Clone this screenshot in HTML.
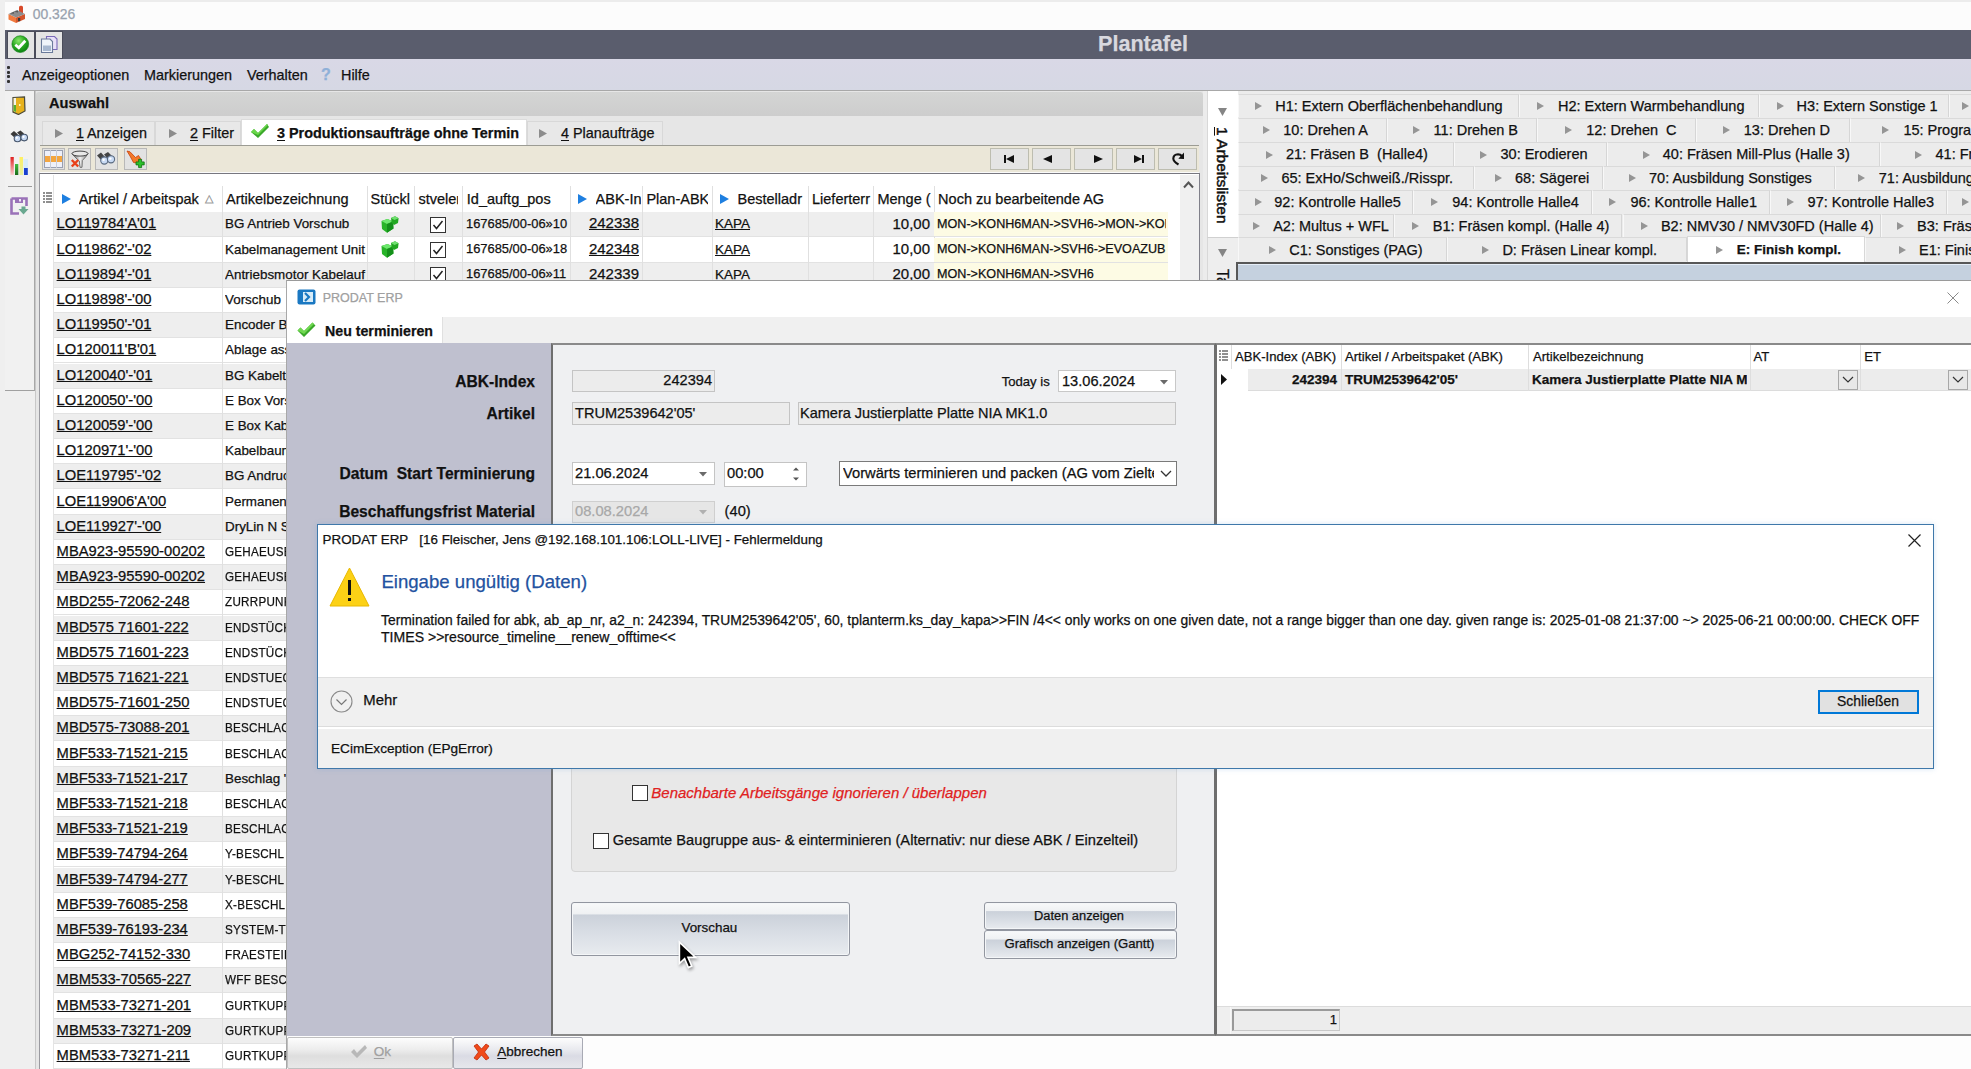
<!DOCTYPE html><html><head><meta charset="utf-8"><style>
html,body{margin:0;padding:0;width:1971px;height:1069px;overflow:hidden;background:#fdfdfd;font-family:"Liberation Sans",sans-serif;}
div{box-sizing:border-box;-webkit-text-stroke:0.25px currentColor;}
.u{text-decoration:underline;text-underline-offset:2px;text-decoration-thickness:1.3px;}
</style></head><body>
<div style="position:absolute;left:0px;top:0px;width:1971px;height:30px;background:#fcfcfc;"></div>
<div style="position:absolute;left:0px;top:0px;width:1971px;height:2px;background:#ececec;"></div>
<div style="position:absolute;left:0px;top:0px;width:5px;height:1069px;background:#efefef;"></div>
<svg style="position:absolute;left:8px;top:5px" width="18" height="19" viewBox="0 0 18 19">
      <rect x="11" y="0.8" width="4" height="8" rx="1.5" fill="#d84a2a"/>
      <path d="M0.5 9 L8 12.5 L8 18 L0.5 14.5Z" fill="#f07a3e"/><path d="M8 12.5 L17 9 L17 14 L8 18Z" fill="#d4552c"/>
      <path d="M0.5 9 L9 5 L17 9 L8 12.5Z" fill="#8c8c8c"/><path d="M2 8.5 L6 6.8 L6 8.8Z M6 6.8 L10 5.6 L10 7.4Z" fill="#5a5a5a"/>
      <rect x="10" y="13" width="2.2" height="3.2" fill="#3a3a3a"/></svg>
<div style="position:absolute;left:32.7px;top:6.16px;font-size:13.9px;line-height:16.68px;color:#98a2ae;font-weight:normal;white-space:nowrap;">00.326</div>
<div style="position:absolute;left:5px;top:30px;width:1966px;height:29px;background:#5a5d6d;"></div>
<div style="position:absolute;left:6.5px;top:30.5px;width:28px;height:28px;background:#e4e4e4;border:1.5px solid #4a4c5a;"></div>
<svg style="position:absolute;left:11px;top:35px" width="19" height="19" viewBox="0 0 19 19">
      <defs><radialGradient id="gg" cx="40%" cy="30%" r="65%"><stop offset="0" stop-color="#8ae86a"/><stop offset="0.6" stop-color="#2aaa22"/><stop offset="1" stop-color="#108a14"/></radialGradient></defs>
      <circle cx="9.3" cy="9.1" r="8.4" fill="url(#gg)" stroke="#0e7a12" stroke-width="0.6"/><path d="M4.3 9.8 L7.8 12.8 L14.3 5.8" stroke="#fff" stroke-width="2.8" fill="none"/></svg>
<div style="position:absolute;left:34.5px;top:30.5px;width:28.5px;height:28px;background:#e4e4e4;border:1.5px solid #4a4c5a;"></div>
<svg style="position:absolute;left:40px;top:35px" width="19" height="19" viewBox="0 0 19 19">
      <path d="M6.5 1.5 L14.5 1.5 L17 4 L17 14.5 L6.5 14.5Z" fill="#e8e0f8" stroke="#7a6ab8" stroke-width="1.1"/>
      <path d="M1.5 4 L10 4 L12.5 6.5 L12.5 17.5 L1.5 17.5Z" fill="#f0f4fa" stroke="#6a7a9a" stroke-width="1.1"/><rect x="3" y="10.5" width="8" height="5.5" fill="#a8b8d0"/></svg>
<div style="position:absolute;left:843px;width:600px;top:31.04px;font-size:21.6px;line-height:25.92px;color:#d8d8de;font-weight:bold;white-space:nowrap;text-align:center;">Plantafel</div>
<div style="position:absolute;left:5px;top:59px;width:1966px;height:32px;background:linear-gradient(#d9d8e6,#d6d8e4);border-bottom:1px solid #a8a8a8;"></div>
<div style="position:absolute;left:7px;top:66.0px;width:3px;height:3px;background:#333;border-radius:1px;"></div>
<div style="position:absolute;left:7px;top:70.5px;width:3px;height:3px;background:#333;border-radius:1px;"></div>
<div style="position:absolute;left:7px;top:75.0px;width:3px;height:3px;background:#333;border-radius:1px;"></div>
<div style="position:absolute;left:7px;top:79.5px;width:3px;height:3px;background:#333;border-radius:1px;"></div>
<div style="position:absolute;left:22px;top:67.36px;font-size:14.4px;line-height:17.28px;color:#111;font-weight:normal;white-space:nowrap;">Anzeigeoptionen</div>
<div style="position:absolute;left:144px;top:67.36px;font-size:14.4px;line-height:17.28px;color:#111;font-weight:normal;white-space:nowrap;">Markierungen</div>
<div style="position:absolute;left:247px;top:67.36px;font-size:14.4px;line-height:17.28px;color:#111;font-weight:normal;white-space:nowrap;">Verhalten</div>
<div style="position:absolute;left:321px;top:65.40px;font-size:16px;line-height:19.20px;color:#8fb0d8;font-weight:bold;white-space:nowrap;">?</div>
<div style="position:absolute;left:341px;top:67.36px;font-size:14.4px;line-height:17.28px;color:#111;font-weight:normal;white-space:nowrap;">Hilfe</div>
<div style="position:absolute;left:5px;top:91px;width:30px;height:300px;background:#f1f1f1;border-right:1px solid #a8a8a8;border-bottom:1.5px solid #a0a0a0;"></div>
<div style="position:absolute;left:8px;top:186px;width:24px;height:1px;background:#9a9a9a;"></div>
<div style="position:absolute;left:35px;top:91px;width:5px;height:978px;background:#e6e6e6;"></div>
<svg style="position:absolute;left:12px;top:96px" width="14" height="19" viewBox="0 0 14 19">
      <path d="M1 1.5 L12.5 1 L13 15 L6.5 18.5 L1 16Z" fill="#e7b21c" stroke="#4a4a3a" stroke-width="1.2"/><path d="M1.6 2 L4 2 L4 16 L1.6 15Z" fill="#f4f4e8"/><path d="M1.6 9 L4 9 L4 16 L1.6 15Z" fill="#58b030"/><rect x="7" y="8" width="1.5" height="2" fill="#fff6c0"/></svg>
<svg style="position:absolute;left:10px;top:130px" width="19" height="13" viewBox="0 0 19 13">
      <path d="M0.5 4 L4 1 L8 4.5 L5 8Z" fill="#3a3a3a"/><path d="M7 2.5 L10.5 0.5 L14 3.5 L11 6.5Z" fill="#3a3a3a"/>
      <circle cx="7.5" cy="8.5" r="3.3" fill="#c8daf4" stroke="#46566c" stroke-width="1.1"/><circle cx="14.2" cy="7.6" r="3.3" fill="#c8daf4" stroke="#46566c" stroke-width="1.1"/>
      <circle cx="6.8" cy="7.8" r="1.1" fill="#fff"/><circle cx="13.5" cy="6.9" r="1.1" fill="#fff"/></svg>
<svg style="position:absolute;left:10px;top:156px" width="19" height="20" viewBox="0 0 19 20">
      <defs><linearGradient id="br" x1="0" y1="0" x2="0" y2="1"><stop offset="0" stop-color="#e02020"/><stop offset="1" stop-color="#f8d0d0"/></linearGradient>
      <linearGradient id="bg2" x1="0" y1="0" x2="0" y2="1"><stop offset="0" stop-color="#40c040"/><stop offset="1" stop-color="#1a6a1a"/></linearGradient>
      <linearGradient id="by" x1="0" y1="0" x2="0" y2="1"><stop offset="0" stop-color="#fff060"/><stop offset="1" stop-color="#e8f0a0"/></linearGradient></defs>
      <rect x="0.5" y="1" width="3.3" height="18" fill="url(#br)"/><rect x="5" y="8" width="3.3" height="11" fill="url(#bg2)"/>
      <rect x="9.5" y="1" width="3.5" height="18" fill="url(#by)"/><rect x="13.5" y="3" width="4.5" height="16" fill="#d8ecf8"/><rect x="14" y="12" width="3.8" height="7" fill="#1a40d0"/></svg>
<svg style="position:absolute;left:10px;top:197px" width="19" height="19" viewBox="0 0 19 19">
      <path d="M1.5 1.5 L16.5 1.5 L16.5 9 M1.5 1.5 L1.5 16.5 L9 16.5" fill="none" stroke="#9a72b8" stroke-width="2.6"/><rect x="5" y="1" width="8" height="5" fill="#9a72b8"/><rect x="9" y="2" width="2" height="2.5" fill="#f0e8f8"/>
      <path d="M11.5 9.5 L15.5 9.5 L15.5 12 L18.5 12 L13.5 17.5 L8.5 12 L11.5 12Z" fill="#6aa890"/></svg>
<div style="position:absolute;left:5px;top:391px;width:30px;height:678px;background:#efefef;"></div>
<div style="position:absolute;left:35px;top:91px;width:1169px;height:978px;background:#e6e6e6;border-left:1px solid #c8c8c8;"></div>
<div style="position:absolute;left:36px;top:92px;width:1167px;height:24px;background:linear-gradient(#d4d5d4,#cdcdcd);border-radius:3px 3px 0 0;"></div>
<div style="position:absolute;left:49px;top:95.24px;font-size:14.6px;line-height:17.52px;color:#111;font-weight:bold;white-space:nowrap;">Auswahl</div>
<div style="position:absolute;left:42px;top:121px;width:113px;height:25px;background:#e8e8e8;border:1px solid #d8d8d8;border-bottom:none;"></div>
<svg style="position:absolute;left:55.0px;top:129.0px" width="8" height="9" viewBox="0 0 8 9"><path d="M0 0 L8 4.5 L0 9Z" fill="#8c8c8c"/></svg>
<div style="position:absolute;left:76px;top:124.86px;font-size:14.4px;line-height:17.28px;color:#111;font-weight:normal;white-space:nowrap;"><span class='u'>1</span>&#8201;Anzeigen</div>
<div style="position:absolute;left:155px;top:121px;width:86px;height:25px;background:#e8e8e8;border:1px solid #d8d8d8;border-bottom:none;"></div>
<svg style="position:absolute;left:169.0px;top:129.0px" width="8" height="9" viewBox="0 0 8 9"><path d="M0 0 L8 4.5 L0 9Z" fill="#8c8c8c"/></svg>
<div style="position:absolute;left:190px;top:124.86px;font-size:14.4px;line-height:17.28px;color:#111;font-weight:normal;white-space:nowrap;"><span class='u'>2</span> Filter</div>
<div style="position:absolute;left:241px;top:119px;width:286px;height:28px;background:#ffffff;border:1px solid #dcdcdc;border-bottom:none;"></div>
<div style="position:absolute;left:277px;top:124.86px;font-size:14.4px;line-height:17.28px;color:#111;font-weight:bold;white-space:nowrap;"><span class='u'>3</span> Produktionsaufträge ohne Termin</div>
<div style="position:absolute;left:527px;top:121px;width:136px;height:25px;background:#e8e8e8;border:1px solid #d8d8d8;border-bottom:none;"></div>
<svg style="position:absolute;left:539.0px;top:129.0px" width="8" height="9" viewBox="0 0 8 9"><path d="M0 0 L8 4.5 L0 9Z" fill="#8c8c8c"/></svg>
<div style="position:absolute;left:561px;top:124.86px;font-size:14.4px;line-height:17.28px;color:#111;font-weight:normal;white-space:nowrap;"><span class='u'>4</span> Planaufträge</div>
<svg style="position:absolute;left:250px;top:123px" width="20" height="17" viewBox="0 0 20 17">
      <path d="M1 9 L4 6 L8 10 L17 1 L19 4 L8 15Z" fill="#3aa82a"/><path d="M1 9 L4 6 L8 10 L17 1 L18 2 L8 12Z" fill="#6ad84a"/></svg>
<div style="position:absolute;left:40px;top:145px;width:1159px;height:28px;background:#ebe7d8;border-top:1px solid #9c9c94;border-bottom:1px solid #fafafa;"></div>
<div style="position:absolute;left:42px;top:148px;width:23px;height:22px;background:#e2e2e2;border:1px solid #b8b8b8;"></div>
<div style="position:absolute;left:68px;top:148px;width:23px;height:22px;background:#e2e2e2;border:1px solid #b8b8b8;"></div>
<div style="position:absolute;left:95px;top:148px;width:23px;height:22px;background:#e2e2e2;border:1px solid #b8b8b8;"></div>
<div style="position:absolute;left:124px;top:148px;width:23px;height:22px;background:#e2e2e2;border:1px solid #b8b8b8;"></div>
<svg style="position:absolute;left:44px;top:150px" width="19" height="18" viewBox="0 0 19 18">
      <rect x="0.5" y="0.5" width="18" height="17" fill="#eef0f8" stroke="#9aa0b0"/><rect x="1" y="6" width="17" height="6" fill="#f3a640"/>
      <path d="M6.5 0 V18 M12.5 0 V18" stroke="#c8ccd8"/></svg>
<svg style="position:absolute;left:70px;top:150px" width="20" height="19" viewBox="0 0 20 19">
      <defs><linearGradient id="fun" x1="0" x2="1"><stop offset="0" stop-color="#505050"/><stop offset="0.5" stop-color="#f0f0f0"/><stop offset="1" stop-color="#808080"/></linearGradient></defs>
      <path d="M2 3.6 Q6 8.5 9.3 11 L10 17.3 L12 17.3 L12.3 10.5 Q16 7 18 3.6Z" fill="url(#fun)" stroke="#555" stroke-width="0.8"/>
      <ellipse cx="10" cy="3.6" rx="8" ry="2.5" fill="#e8e8e8" stroke="#333" stroke-width="0.9"/>
      <path d="M1.8 10 L8.2 16.5 M8.2 10 L1.8 16.5" stroke="#e8401a" stroke-width="2.4"/></svg>
<svg style="position:absolute;left:96px;top:151px" width="20" height="16" viewBox="0 0 20 16">
      <path d="M1 4.5 L5 1.5 L9 6 L6 10Z" fill="#444"/><path d="M8 3.5 L12 1 L16 5 L12.5 8.5Z" fill="#444"/>
      <circle cx="8.3" cy="9.5" r="3.6" fill="#c8daf4" stroke="#5a6a80" stroke-width="1.1"/><circle cx="15" cy="8.3" r="3.6" fill="#c8daf4" stroke="#5a6a80" stroke-width="1.1"/>
      <circle cx="7.6" cy="8.8" r="1.2" fill="#fff"/><circle cx="14.3" cy="7.6" r="1.2" fill="#fff"/></svg>
<svg style="position:absolute;left:126px;top:150px" width="20" height="19" viewBox="0 0 20 19">
      <path d="M1 1 L4 1.8 L9.5 7.5 L12.5 5.5 L15 9.5 L13 13.5 L7.5 12.5 L4 6Z" fill="#f47a28" stroke="#c8400a" stroke-width="0.8"/>
      <path d="M12.6 9.3 H15.6 V11.9 H18.2 V14.9 H15.6 V17.6 H12.6 V14.9 H10 V11.9 H12.6Z" fill="#2cc02c" stroke="#107010" stroke-width="0.8"/></svg>
<div style="position:absolute;left:990px;top:148px;width:39px;height:22px;background:#e4e4e4;border:1px solid #bdbdb0;"></div>
<div style="position:absolute;left:1032px;top:148px;width:39px;height:22px;background:#e4e4e4;border:1px solid #bdbdb0;"></div>
<div style="position:absolute;left:1074px;top:148px;width:39px;height:22px;background:#e4e4e4;border:1px solid #bdbdb0;"></div>
<div style="position:absolute;left:1116px;top:148px;width:39px;height:22px;background:#e4e4e4;border:1px solid #bdbdb0;"></div>
<div style="position:absolute;left:1158px;top:148px;width:39px;height:22px;background:#e4e4e4;border:1px solid #bdbdb0;"></div>
<svg style="position:absolute;left:990px;top:148px" width="210" height="22" viewBox="0 0 210 22">
      <rect x="14" y="7" width="2" height="8" fill="#111"/><path d="M16 11 L24 7 L24 15Z" fill="#111"/>
      <path d="M53 11 L62 7 L62 15Z" fill="#111"/>
      <path d="M104 7 L113 11 L104 15Z" fill="#111"/>
      <path d="M144 7 L152 11 L144 15Z" fill="#111"/><rect x="152" y="7" width="2" height="8" fill="#111"/>
      <path d="M188.5 16.5 Q183.3 13.5 183.3 10.5 Q183.5 6.3 188 6.2 Q190.5 6.3 191.8 8" stroke="#111" stroke-width="2.1" fill="none"/><path d="M194 4.6 L194 11 L188.3 10.7Z" fill="#111"/></svg>
<div style="position:absolute;left:39px;top:173px;width:1161px;height:896px;background:#ffffff;border-top:1.5px solid #77777f;border-left:1px solid #9a9aa0;border-right:1.5px solid #80808a;"></div>
<div style="position:absolute;left:53px;top:175px;width:1px;height:894px;background:#e4e4e4;"></div>
<div style="position:absolute;left:1180px;top:175px;width:18.5px;height:894px;background:#f0f0f0;"></div>
<svg style="position:absolute;left:1183px;top:180px" width="11" height="9" viewBox="0 0 11 9"><path d="M1 7.5 L5.5 2.5 L10 7.5" stroke="#555" stroke-width="2" fill="none"/></svg>
<div style="position:absolute;left:221.5px;top:186px;width:1px;height:883px;background:#e0e0e0;"></div>
<div style="position:absolute;left:366.5px;top:186px;width:1px;height:883px;background:#e0e0e0;"></div>
<div style="position:absolute;left:413.5px;top:186px;width:1px;height:883px;background:#e0e0e0;"></div>
<div style="position:absolute;left:461.7px;top:186px;width:1px;height:883px;background:#e0e0e0;"></div>
<div style="position:absolute;left:569.9px;top:186px;width:1px;height:883px;background:#e0e0e0;"></div>
<div style="position:absolute;left:641.7px;top:186px;width:1px;height:883px;background:#e0e0e0;"></div>
<div style="position:absolute;left:711.6px;top:186px;width:1px;height:883px;background:#e0e0e0;"></div>
<div style="position:absolute;left:807.5px;top:186px;width:1px;height:883px;background:#e0e0e0;"></div>
<div style="position:absolute;left:873.2px;top:186px;width:1px;height:883px;background:#e0e0e0;"></div>
<div style="position:absolute;left:933.5px;top:186px;width:1px;height:883px;background:#e0e0e0;"></div>
<svg style="position:absolute;left:43px;top:192px" width="9" height="12" viewBox="0 0 9 12">
      <path d="M0 1h2M0 4h2M0 7h2M0 10h2M3 1h6M3 4h6M3 7h6M3 10h6" stroke="#222" stroke-width="1.2"/></svg>
<svg style="position:absolute;left:61px;top:192.6px" width="11" height="12" viewBox="0 0 11 12"><path d="M1 1 L10 6 L1 11Z" fill="#1e7fe0"/></svg>
<svg style="position:absolute;left:577px;top:192.6px" width="11" height="12" viewBox="0 0 11 12"><path d="M1 1 L10 6 L1 11Z" fill="#1e7fe0"/></svg>
<svg style="position:absolute;left:719px;top:192.6px" width="11" height="12" viewBox="0 0 11 12"><path d="M1 1 L10 6 L1 11Z" fill="#1e7fe0"/></svg>
<div style="position:absolute;left:78.7px;top:189.6px;width:120px;overflow:hidden;font-size:14.5px;line-height:18px;color:#111;white-space:nowrap">Artikel / Arbeitspak</div>
<div style="position:absolute;left:226px;top:189.6px;width:138px;overflow:hidden;font-size:14.5px;line-height:18px;color:#111;white-space:nowrap">Artikelbezeichnung</div>
<div style="position:absolute;left:370.6px;top:189.6px;width:41px;overflow:hidden;font-size:14.5px;line-height:18px;color:#111;white-space:nowrap">Stückl</div>
<div style="position:absolute;left:418.4px;top:189.6px;width:40px;overflow:hidden;font-size:14.5px;line-height:18px;color:#111;white-space:nowrap">stveler</div>
<div style="position:absolute;left:466.8px;top:189.6px;width:100px;overflow:hidden;font-size:14.5px;line-height:18px;color:#111;white-space:nowrap">Id_auftg_pos</div>
<div style="position:absolute;left:595.6px;top:189.6px;width:45px;overflow:hidden;font-size:14.5px;line-height:18px;color:#111;white-space:nowrap">ABK-In</div>
<div style="position:absolute;left:646.4px;top:189.6px;width:62px;overflow:hidden;font-size:14.5px;line-height:18px;color:#111;white-space:nowrap">Plan-ABK</div>
<div style="position:absolute;left:737.5px;top:189.6px;width:68px;overflow:hidden;font-size:14.5px;line-height:18px;color:#111;white-space:nowrap">Bestelladr</div>
<div style="position:absolute;left:812px;top:189.6px;width:59px;overflow:hidden;font-size:14.5px;line-height:18px;color:#111;white-space:nowrap">Lieferterr</div>
<div style="position:absolute;left:877.4px;top:189.6px;width:54px;overflow:hidden;font-size:14.5px;line-height:18px;color:#111;white-space:nowrap">Menge (</div>
<div style="position:absolute;left:938.1px;top:189.6px;width:230px;overflow:hidden;font-size:14.5px;line-height:18px;color:#111;white-space:nowrap">Noch zu bearbeitende AG</div>
<div style="position:absolute;left:-91px;width:600px;top:192.00px;font-size:11px;line-height:13.20px;color:#909090;font-weight:normal;white-space:nowrap;text-align:center;">&#9651;</div>
<div style="position:absolute;left:54px;top:212.3px;width:1114px;height:25.2px;background:#eeeeee;border-bottom:1px solid #e2e2e2;"></div>
<div style="position:absolute;left:56.6px;top:214.40px;font-size:14.75px;line-height:18px;color:#111;white-space:nowrap;text-decoration:underline;text-underline-offset:1.2px;text-decoration-thickness:1.4px">LO119784'A'01</div>
<div style="position:absolute;left:225px;top:215.40px;width:141px;overflow:hidden;font-size:13.4px;line-height:17px;color:#111;white-space:nowrap">BG Antrieb Vorschub</div>
<div style="position:absolute;left:54px;top:237.5px;width:1114px;height:25.2px;background:#ffffff;border-bottom:1px solid #e2e2e2;"></div>
<div style="position:absolute;left:56.6px;top:239.60px;font-size:14.75px;line-height:18px;color:#111;white-space:nowrap;text-decoration:underline;text-underline-offset:1.2px;text-decoration-thickness:1.4px">LO119862'-'02</div>
<div style="position:absolute;left:225px;top:240.60px;width:141px;overflow:hidden;font-size:13.4px;line-height:17px;color:#111;white-space:nowrap">Kabelmanagement Unit F</div>
<div style="position:absolute;left:54px;top:262.7px;width:1114px;height:25.2px;background:#eeeeee;border-bottom:1px solid #e2e2e2;"></div>
<div style="position:absolute;left:56.6px;top:264.80px;font-size:14.75px;line-height:18px;color:#111;white-space:nowrap;text-decoration:underline;text-underline-offset:1.2px;text-decoration-thickness:1.4px">LO119894'-'01</div>
<div style="position:absolute;left:225px;top:265.80px;width:141px;overflow:hidden;font-size:13.4px;line-height:17px;color:#111;white-space:nowrap">Antriebsmotor Kabelauf</div>
<div style="position:absolute;left:54px;top:287.9px;width:1114px;height:25.2px;background:#ffffff;border-bottom:1px solid #e2e2e2;"></div>
<div style="position:absolute;left:56.6px;top:290.00px;font-size:14.75px;line-height:18px;color:#111;white-space:nowrap;text-decoration:underline;text-underline-offset:1.2px;text-decoration-thickness:1.4px">LO119898'-'00</div>
<div style="position:absolute;left:225px;top:291.00px;width:141px;overflow:hidden;font-size:13.4px;line-height:17px;color:#111;white-space:nowrap">Vorschub</div>
<div style="position:absolute;left:54px;top:313.1px;width:1114px;height:25.2px;background:#eeeeee;border-bottom:1px solid #e2e2e2;"></div>
<div style="position:absolute;left:56.6px;top:315.20px;font-size:14.75px;line-height:18px;color:#111;white-space:nowrap;text-decoration:underline;text-underline-offset:1.2px;text-decoration-thickness:1.4px">LO119950'-'01</div>
<div style="position:absolute;left:225px;top:316.20px;width:141px;overflow:hidden;font-size:13.4px;line-height:17px;color:#111;white-space:nowrap">Encoder BG</div>
<div style="position:absolute;left:54px;top:338.3px;width:1114px;height:25.2px;background:#ffffff;border-bottom:1px solid #e2e2e2;"></div>
<div style="position:absolute;left:56.6px;top:340.40px;font-size:14.75px;line-height:18px;color:#111;white-space:nowrap;text-decoration:underline;text-underline-offset:1.2px;text-decoration-thickness:1.4px">LO120011'B'01</div>
<div style="position:absolute;left:225px;top:341.40px;width:141px;overflow:hidden;font-size:13.4px;line-height:17px;color:#111;white-space:nowrap">Ablage ass</div>
<div style="position:absolute;left:54px;top:363.5px;width:1114px;height:25.2px;background:#eeeeee;border-bottom:1px solid #e2e2e2;"></div>
<div style="position:absolute;left:56.6px;top:365.60px;font-size:14.75px;line-height:18px;color:#111;white-space:nowrap;text-decoration:underline;text-underline-offset:1.2px;text-decoration-thickness:1.4px">LO120040'-'01</div>
<div style="position:absolute;left:225px;top:366.60px;width:141px;overflow:hidden;font-size:13.4px;line-height:17px;color:#111;white-space:nowrap">BG Kabeltr</div>
<div style="position:absolute;left:54px;top:388.7px;width:1114px;height:25.2px;background:#ffffff;border-bottom:1px solid #e2e2e2;"></div>
<div style="position:absolute;left:56.6px;top:390.80px;font-size:14.75px;line-height:18px;color:#111;white-space:nowrap;text-decoration:underline;text-underline-offset:1.2px;text-decoration-thickness:1.4px">LO120050'-'00</div>
<div style="position:absolute;left:225px;top:391.80px;width:141px;overflow:hidden;font-size:13.4px;line-height:17px;color:#111;white-space:nowrap">E Box Vors</div>
<div style="position:absolute;left:54px;top:413.9px;width:1114px;height:25.2px;background:#eeeeee;border-bottom:1px solid #e2e2e2;"></div>
<div style="position:absolute;left:56.6px;top:416.00px;font-size:14.75px;line-height:18px;color:#111;white-space:nowrap;text-decoration:underline;text-underline-offset:1.2px;text-decoration-thickness:1.4px">LO120059'-'00</div>
<div style="position:absolute;left:225px;top:417.00px;width:141px;overflow:hidden;font-size:13.4px;line-height:17px;color:#111;white-space:nowrap">E Box Kabe</div>
<div style="position:absolute;left:54px;top:439.1px;width:1114px;height:25.2px;background:#ffffff;border-bottom:1px solid #e2e2e2;"></div>
<div style="position:absolute;left:56.6px;top:441.20px;font-size:14.75px;line-height:18px;color:#111;white-space:nowrap;text-decoration:underline;text-underline-offset:1.2px;text-decoration-thickness:1.4px">LO120971'-'00</div>
<div style="position:absolute;left:225px;top:442.20px;width:141px;overflow:hidden;font-size:13.4px;line-height:17px;color:#111;white-space:nowrap">Kabelbaum</div>
<div style="position:absolute;left:54px;top:464.3px;width:1114px;height:25.2px;background:#eeeeee;border-bottom:1px solid #e2e2e2;"></div>
<div style="position:absolute;left:56.6px;top:466.40px;font-size:14.75px;line-height:18px;color:#111;white-space:nowrap;text-decoration:underline;text-underline-offset:1.2px;text-decoration-thickness:1.4px">LOE119795'-'02</div>
<div style="position:absolute;left:225px;top:467.40px;width:141px;overflow:hidden;font-size:13.4px;line-height:17px;color:#111;white-space:nowrap">BG Andruc</div>
<div style="position:absolute;left:54px;top:489.5px;width:1114px;height:25.2px;background:#ffffff;border-bottom:1px solid #e2e2e2;"></div>
<div style="position:absolute;left:56.6px;top:491.60px;font-size:14.75px;line-height:18px;color:#111;white-space:nowrap;text-decoration:underline;text-underline-offset:1.2px;text-decoration-thickness:1.4px">LOE119906'A'00</div>
<div style="position:absolute;left:225px;top:492.60px;width:141px;overflow:hidden;font-size:13.4px;line-height:17px;color:#111;white-space:nowrap">Permanent</div>
<div style="position:absolute;left:54px;top:514.7px;width:1114px;height:25.2px;background:#eeeeee;border-bottom:1px solid #e2e2e2;"></div>
<div style="position:absolute;left:56.6px;top:516.80px;font-size:14.75px;line-height:18px;color:#111;white-space:nowrap;text-decoration:underline;text-underline-offset:1.2px;text-decoration-thickness:1.4px">LOE119927'-'00</div>
<div style="position:absolute;left:225px;top:517.80px;width:141px;overflow:hidden;font-size:13.4px;line-height:17px;color:#111;white-space:nowrap">DryLin N S</div>
<div style="position:absolute;left:54px;top:539.9px;width:1114px;height:25.2px;background:#ffffff;border-bottom:1px solid #e2e2e2;"></div>
<div style="position:absolute;left:56.6px;top:542.00px;font-size:14.75px;line-height:18px;color:#111;white-space:nowrap;text-decoration:underline;text-underline-offset:1.2px;text-decoration-thickness:1.4px">MBA923-95590-00202</div>
<div style="position:absolute;left:225px;top:543.00px;width:62px;overflow:hidden;height:18px"><div style="font-size:13.4px;line-height:17px;color:#111;white-space:nowrap;transform:scaleX(0.87);transform-origin:0 0;letter-spacing:0.3px">GEHAEUSE</div></div>
<div style="position:absolute;left:54px;top:565.1px;width:1114px;height:25.2px;background:#eeeeee;border-bottom:1px solid #e2e2e2;"></div>
<div style="position:absolute;left:56.6px;top:567.20px;font-size:14.75px;line-height:18px;color:#111;white-space:nowrap;text-decoration:underline;text-underline-offset:1.2px;text-decoration-thickness:1.4px">MBA923-95590-00202</div>
<div style="position:absolute;left:225px;top:568.20px;width:62px;overflow:hidden;height:18px"><div style="font-size:13.4px;line-height:17px;color:#111;white-space:nowrap;transform:scaleX(0.87);transform-origin:0 0;letter-spacing:0.3px">GEHAEUSE</div></div>
<div style="position:absolute;left:54px;top:590.3px;width:1114px;height:25.2px;background:#ffffff;border-bottom:1px solid #e2e2e2;"></div>
<div style="position:absolute;left:56.6px;top:592.40px;font-size:14.75px;line-height:18px;color:#111;white-space:nowrap;text-decoration:underline;text-underline-offset:1.2px;text-decoration-thickness:1.4px">MBD255-72062-248</div>
<div style="position:absolute;left:225px;top:593.40px;width:62px;overflow:hidden;height:18px"><div style="font-size:13.4px;line-height:17px;color:#111;white-space:nowrap;transform:scaleX(0.87);transform-origin:0 0;letter-spacing:0.3px">ZURRPUNK</div></div>
<div style="position:absolute;left:54px;top:615.5px;width:1114px;height:25.2px;background:#eeeeee;border-bottom:1px solid #e2e2e2;"></div>
<div style="position:absolute;left:56.6px;top:617.60px;font-size:14.75px;line-height:18px;color:#111;white-space:nowrap;text-decoration:underline;text-underline-offset:1.2px;text-decoration-thickness:1.4px">MBD575 71601-222</div>
<div style="position:absolute;left:225px;top:618.60px;width:62px;overflow:hidden;height:18px"><div style="font-size:13.4px;line-height:17px;color:#111;white-space:nowrap;transform:scaleX(0.87);transform-origin:0 0;letter-spacing:0.3px">ENDSTÜCK</div></div>
<div style="position:absolute;left:54px;top:640.7px;width:1114px;height:25.2px;background:#ffffff;border-bottom:1px solid #e2e2e2;"></div>
<div style="position:absolute;left:56.6px;top:642.80px;font-size:14.75px;line-height:18px;color:#111;white-space:nowrap;text-decoration:underline;text-underline-offset:1.2px;text-decoration-thickness:1.4px">MBD575 71601-223</div>
<div style="position:absolute;left:225px;top:643.80px;width:62px;overflow:hidden;height:18px"><div style="font-size:13.4px;line-height:17px;color:#111;white-space:nowrap;transform:scaleX(0.87);transform-origin:0 0;letter-spacing:0.3px">ENDSTÜCK</div></div>
<div style="position:absolute;left:54px;top:665.9px;width:1114px;height:25.2px;background:#eeeeee;border-bottom:1px solid #e2e2e2;"></div>
<div style="position:absolute;left:56.6px;top:668.00px;font-size:14.75px;line-height:18px;color:#111;white-space:nowrap;text-decoration:underline;text-underline-offset:1.2px;text-decoration-thickness:1.4px">MBD575 71621-221</div>
<div style="position:absolute;left:225px;top:669.00px;width:62px;overflow:hidden;height:18px"><div style="font-size:13.4px;line-height:17px;color:#111;white-space:nowrap;transform:scaleX(0.87);transform-origin:0 0;letter-spacing:0.3px">ENDSTUEC</div></div>
<div style="position:absolute;left:54px;top:691.1px;width:1114px;height:25.2px;background:#ffffff;border-bottom:1px solid #e2e2e2;"></div>
<div style="position:absolute;left:56.6px;top:693.20px;font-size:14.75px;line-height:18px;color:#111;white-space:nowrap;text-decoration:underline;text-underline-offset:1.2px;text-decoration-thickness:1.4px">MBD575-71601-250</div>
<div style="position:absolute;left:225px;top:694.20px;width:62px;overflow:hidden;height:18px"><div style="font-size:13.4px;line-height:17px;color:#111;white-space:nowrap;transform:scaleX(0.87);transform-origin:0 0;letter-spacing:0.3px">ENDSTUEC</div></div>
<div style="position:absolute;left:54px;top:716.3px;width:1114px;height:25.2px;background:#eeeeee;border-bottom:1px solid #e2e2e2;"></div>
<div style="position:absolute;left:56.6px;top:718.40px;font-size:14.75px;line-height:18px;color:#111;white-space:nowrap;text-decoration:underline;text-underline-offset:1.2px;text-decoration-thickness:1.4px">MBD575-73088-201</div>
<div style="position:absolute;left:225px;top:719.40px;width:62px;overflow:hidden;height:18px"><div style="font-size:13.4px;line-height:17px;color:#111;white-space:nowrap;transform:scaleX(0.87);transform-origin:0 0;letter-spacing:0.3px">BESCHLAG</div></div>
<div style="position:absolute;left:54px;top:741.5px;width:1114px;height:25.2px;background:#ffffff;border-bottom:1px solid #e2e2e2;"></div>
<div style="position:absolute;left:56.6px;top:743.60px;font-size:14.75px;line-height:18px;color:#111;white-space:nowrap;text-decoration:underline;text-underline-offset:1.2px;text-decoration-thickness:1.4px">MBF533-71521-215</div>
<div style="position:absolute;left:225px;top:744.60px;width:62px;overflow:hidden;height:18px"><div style="font-size:13.4px;line-height:17px;color:#111;white-space:nowrap;transform:scaleX(0.87);transform-origin:0 0;letter-spacing:0.3px">BESCHLAG</div></div>
<div style="position:absolute;left:54px;top:766.7px;width:1114px;height:25.2px;background:#eeeeee;border-bottom:1px solid #e2e2e2;"></div>
<div style="position:absolute;left:56.6px;top:768.80px;font-size:14.75px;line-height:18px;color:#111;white-space:nowrap;text-decoration:underline;text-underline-offset:1.2px;text-decoration-thickness:1.4px">MBF533-71521-217</div>
<div style="position:absolute;left:225px;top:769.80px;width:141px;overflow:hidden;font-size:13.4px;line-height:17px;color:#111;white-space:nowrap">Beschlag &quot;</div>
<div style="position:absolute;left:54px;top:791.9px;width:1114px;height:25.2px;background:#ffffff;border-bottom:1px solid #e2e2e2;"></div>
<div style="position:absolute;left:56.6px;top:794.00px;font-size:14.75px;line-height:18px;color:#111;white-space:nowrap;text-decoration:underline;text-underline-offset:1.2px;text-decoration-thickness:1.4px">MBF533-71521-218</div>
<div style="position:absolute;left:225px;top:795.00px;width:62px;overflow:hidden;height:18px"><div style="font-size:13.4px;line-height:17px;color:#111;white-space:nowrap;transform:scaleX(0.87);transform-origin:0 0;letter-spacing:0.3px">BESCHLAG</div></div>
<div style="position:absolute;left:54px;top:817.1px;width:1114px;height:25.2px;background:#eeeeee;border-bottom:1px solid #e2e2e2;"></div>
<div style="position:absolute;left:56.6px;top:819.20px;font-size:14.75px;line-height:18px;color:#111;white-space:nowrap;text-decoration:underline;text-underline-offset:1.2px;text-decoration-thickness:1.4px">MBF533-71521-219</div>
<div style="position:absolute;left:225px;top:820.20px;width:62px;overflow:hidden;height:18px"><div style="font-size:13.4px;line-height:17px;color:#111;white-space:nowrap;transform:scaleX(0.87);transform-origin:0 0;letter-spacing:0.3px">BESCHLAG</div></div>
<div style="position:absolute;left:54px;top:842.3px;width:1114px;height:25.2px;background:#ffffff;border-bottom:1px solid #e2e2e2;"></div>
<div style="position:absolute;left:56.6px;top:844.40px;font-size:14.75px;line-height:18px;color:#111;white-space:nowrap;text-decoration:underline;text-underline-offset:1.2px;text-decoration-thickness:1.4px">MBF539-74794-264</div>
<div style="position:absolute;left:225px;top:845.40px;width:62px;overflow:hidden;height:18px"><div style="font-size:13.4px;line-height:17px;color:#111;white-space:nowrap;transform:scaleX(0.87);transform-origin:0 0;letter-spacing:0.3px">Y-BESCHL</div></div>
<div style="position:absolute;left:54px;top:867.5px;width:1114px;height:25.2px;background:#eeeeee;border-bottom:1px solid #e2e2e2;"></div>
<div style="position:absolute;left:56.6px;top:869.60px;font-size:14.75px;line-height:18px;color:#111;white-space:nowrap;text-decoration:underline;text-underline-offset:1.2px;text-decoration-thickness:1.4px">MBF539-74794-277</div>
<div style="position:absolute;left:225px;top:870.60px;width:62px;overflow:hidden;height:18px"><div style="font-size:13.4px;line-height:17px;color:#111;white-space:nowrap;transform:scaleX(0.87);transform-origin:0 0;letter-spacing:0.3px">Y-BESCHL</div></div>
<div style="position:absolute;left:54px;top:892.7px;width:1114px;height:25.2px;background:#ffffff;border-bottom:1px solid #e2e2e2;"></div>
<div style="position:absolute;left:56.6px;top:894.80px;font-size:14.75px;line-height:18px;color:#111;white-space:nowrap;text-decoration:underline;text-underline-offset:1.2px;text-decoration-thickness:1.4px">MBF539-76085-258</div>
<div style="position:absolute;left:225px;top:895.80px;width:62px;overflow:hidden;height:18px"><div style="font-size:13.4px;line-height:17px;color:#111;white-space:nowrap;transform:scaleX(0.87);transform-origin:0 0;letter-spacing:0.3px">X-BESCHL</div></div>
<div style="position:absolute;left:54px;top:917.9px;width:1114px;height:25.2px;background:#eeeeee;border-bottom:1px solid #e2e2e2;"></div>
<div style="position:absolute;left:56.6px;top:920.00px;font-size:14.75px;line-height:18px;color:#111;white-space:nowrap;text-decoration:underline;text-underline-offset:1.2px;text-decoration-thickness:1.4px">MBF539-76193-234</div>
<div style="position:absolute;left:225px;top:921.00px;width:62px;overflow:hidden;height:18px"><div style="font-size:13.4px;line-height:17px;color:#111;white-space:nowrap;transform:scaleX(0.87);transform-origin:0 0;letter-spacing:0.3px">SYSTEM-T</div></div>
<div style="position:absolute;left:54px;top:943.1px;width:1114px;height:25.2px;background:#ffffff;border-bottom:1px solid #e2e2e2;"></div>
<div style="position:absolute;left:56.6px;top:945.20px;font-size:14.75px;line-height:18px;color:#111;white-space:nowrap;text-decoration:underline;text-underline-offset:1.2px;text-decoration-thickness:1.4px">MBG252-74152-330</div>
<div style="position:absolute;left:225px;top:946.20px;width:62px;overflow:hidden;height:18px"><div style="font-size:13.4px;line-height:17px;color:#111;white-space:nowrap;transform:scaleX(0.87);transform-origin:0 0;letter-spacing:0.3px">FRAESTEIL</div></div>
<div style="position:absolute;left:54px;top:968.3px;width:1114px;height:25.2px;background:#eeeeee;border-bottom:1px solid #e2e2e2;"></div>
<div style="position:absolute;left:56.6px;top:970.40px;font-size:14.75px;line-height:18px;color:#111;white-space:nowrap;text-decoration:underline;text-underline-offset:1.2px;text-decoration-thickness:1.4px">MBM533-70565-227</div>
<div style="position:absolute;left:225px;top:971.40px;width:62px;overflow:hidden;height:18px"><div style="font-size:13.4px;line-height:17px;color:#111;white-space:nowrap;transform:scaleX(0.87);transform-origin:0 0;letter-spacing:0.3px">WFF BESC</div></div>
<div style="position:absolute;left:54px;top:993.5px;width:1114px;height:25.2px;background:#ffffff;border-bottom:1px solid #e2e2e2;"></div>
<div style="position:absolute;left:56.6px;top:995.60px;font-size:14.75px;line-height:18px;color:#111;white-space:nowrap;text-decoration:underline;text-underline-offset:1.2px;text-decoration-thickness:1.4px">MBM533-73271-201</div>
<div style="position:absolute;left:225px;top:996.60px;width:62px;overflow:hidden;height:18px"><div style="font-size:13.4px;line-height:17px;color:#111;white-space:nowrap;transform:scaleX(0.87);transform-origin:0 0;letter-spacing:0.3px">GURTKUPP</div></div>
<div style="position:absolute;left:54px;top:1018.7px;width:1114px;height:25.2px;background:#eeeeee;border-bottom:1px solid #e2e2e2;"></div>
<div style="position:absolute;left:56.6px;top:1020.80px;font-size:14.75px;line-height:18px;color:#111;white-space:nowrap;text-decoration:underline;text-underline-offset:1.2px;text-decoration-thickness:1.4px">MBM533-73271-209</div>
<div style="position:absolute;left:225px;top:1021.80px;width:62px;overflow:hidden;height:18px"><div style="font-size:13.4px;line-height:17px;color:#111;white-space:nowrap;transform:scaleX(0.87);transform-origin:0 0;letter-spacing:0.3px">GURTKUPP</div></div>
<div style="position:absolute;left:54px;top:1043.9px;width:1114px;height:25.2px;background:#ffffff;border-bottom:1px solid #e2e2e2;"></div>
<div style="position:absolute;left:56.6px;top:1046.00px;font-size:14.75px;line-height:18px;color:#111;white-space:nowrap;text-decoration:underline;text-underline-offset:1.2px;text-decoration-thickness:1.4px">MBM533-73271-211</div>
<div style="position:absolute;left:225px;top:1047.00px;width:62px;overflow:hidden;height:18px"><div style="font-size:13.4px;line-height:17px;color:#111;white-space:nowrap;transform:scaleX(0.87);transform-origin:0 0;letter-spacing:0.3px">GURTKUPP</div></div>
<div style="position:absolute;left:221.5px;top:212px;width:1px;height:857px;background:#e0e0e0;"></div>
<div style="position:absolute;left:366.5px;top:212px;width:1px;height:857px;background:#e0e0e0;"></div>
<div style="position:absolute;left:413.5px;top:212px;width:1px;height:857px;background:#e0e0e0;"></div>
<div style="position:absolute;left:461.7px;top:212px;width:1px;height:857px;background:#e0e0e0;"></div>
<div style="position:absolute;left:569.9px;top:212px;width:1px;height:857px;background:#e0e0e0;"></div>
<div style="position:absolute;left:641.7px;top:212px;width:1px;height:857px;background:#e0e0e0;"></div>
<div style="position:absolute;left:711.6px;top:212px;width:1px;height:857px;background:#e0e0e0;"></div>
<div style="position:absolute;left:807.5px;top:212px;width:1px;height:857px;background:#e0e0e0;"></div>
<div style="position:absolute;left:873.2px;top:212px;width:1px;height:857px;background:#e0e0e0;"></div>
<div style="position:absolute;left:933.5px;top:212px;width:1px;height:857px;background:#e0e0e0;"></div>
<div style="position:absolute;left:934px;top:212.3px;width:234px;height:24.2px;background:#fdfbe4;"></div>
<div style="position:absolute;left:466px;top:215.90px;font-size:12.9px;line-height:16px;color:#111;white-space:nowrap">167685/00-06»10</div>
<div style="position:absolute;left:585px;width:54px;text-align:right;top:214.40px;font-size:15px;line-height:18px;color:#111;white-space:nowrap;text-decoration:underline;text-underline-offset:1.2px;text-decoration-thickness:1.4px">242338</div>
<div style="position:absolute;left:715px;top:215.40px;font-size:13.5px;line-height:17px;color:#111;white-space:nowrap;text-decoration:underline;text-underline-offset:1.2px;text-decoration-thickness:1.4px">KAPA</div>
<div style="position:absolute;left:880px;width:50px;text-align:right;top:214.90px;font-size:15px;line-height:18px;color:#111;white-space:nowrap">10,00</div>
<div style="position:absolute;left:937px;top:215.90px;width:229px;overflow:hidden;font-size:12.6px;line-height:16px;color:#111;white-space:nowrap">MON-&gt;KONH6MAN-&gt;SVH6-&gt;MON-&gt;KON</div>
<div style="position:absolute;left:430px;top:216.9px;width:16px;height:16px;background:#fff;border:1.5px solid #333;"></div>
<svg style="position:absolute;left:430px;top:216.90px" width="16" height="16" viewBox="0 0 16 16"><path d="M3.5 8 L6.5 11.5 L12.5 4" stroke="#222" stroke-width="1.5" fill="none"/></svg>
<svg style="position:absolute;left:380.5px;top:216.20px" width="18" height="18" viewBox="0 0 18 18"><path d="M0.5 5 L6.5 3 L12 5.5 L12.5 12.5 L6 16.8 L1 13Z" fill="#28b428"/><path d="M0.5 5 L6.5 3 L12 5.5 L6 8Z" fill="#6ee86e"/><path d="M6 8 L12 5.5 L12.5 12.5 L6 16.8Z" fill="#14901a"/><path d="M10 2 L14 0.3 L17.6 2.3 L17 7 L13 9 L10.5 6.5Z" fill="#22a822"/><path d="M10 2 L14 0.3 L17.6 2.3 L13.5 4Z" fill="#70e070"/></svg>
<div style="position:absolute;left:934px;top:237.5px;width:234px;height:24.2px;background:#fdfbe4;"></div>
<div style="position:absolute;left:466px;top:241.10px;font-size:12.9px;line-height:16px;color:#111;white-space:nowrap">167685/00-06»18</div>
<div style="position:absolute;left:585px;width:54px;text-align:right;top:239.60px;font-size:15px;line-height:18px;color:#111;white-space:nowrap;text-decoration:underline;text-underline-offset:1.2px;text-decoration-thickness:1.4px">242348</div>
<div style="position:absolute;left:715px;top:240.60px;font-size:13.5px;line-height:17px;color:#111;white-space:nowrap;text-decoration:underline;text-underline-offset:1.2px;text-decoration-thickness:1.4px">KAPA</div>
<div style="position:absolute;left:880px;width:50px;text-align:right;top:240.10px;font-size:15px;line-height:18px;color:#111;white-space:nowrap">10,00</div>
<div style="position:absolute;left:937px;top:241.10px;width:229px;overflow:hidden;font-size:12.6px;line-height:16px;color:#111;white-space:nowrap">MON-&gt;KONH6MAN-&gt;SVH6-&gt;EVOAZUB</div>
<div style="position:absolute;left:430px;top:242.1px;width:16px;height:16px;background:#fff;border:1.5px solid #333;"></div>
<svg style="position:absolute;left:430px;top:242.10px" width="16" height="16" viewBox="0 0 16 16"><path d="M3.5 8 L6.5 11.5 L12.5 4" stroke="#222" stroke-width="1.5" fill="none"/></svg>
<svg style="position:absolute;left:380.5px;top:241.40px" width="18" height="18" viewBox="0 0 18 18"><path d="M0.5 5 L6.5 3 L12 5.5 L12.5 12.5 L6 16.8 L1 13Z" fill="#28b428"/><path d="M0.5 5 L6.5 3 L12 5.5 L6 8Z" fill="#6ee86e"/><path d="M6 8 L12 5.5 L12.5 12.5 L6 16.8Z" fill="#14901a"/><path d="M10 2 L14 0.3 L17.6 2.3 L17 7 L13 9 L10.5 6.5Z" fill="#22a822"/><path d="M10 2 L14 0.3 L17.6 2.3 L13.5 4Z" fill="#70e070"/></svg>
<div style="position:absolute;left:934px;top:262.7px;width:234px;height:24.2px;background:#fdfbe4;"></div>
<div style="position:absolute;left:466px;top:266.30px;font-size:12.9px;line-height:16px;color:#111;white-space:nowrap">167685/00-06»11</div>
<div style="position:absolute;left:585px;width:54px;text-align:right;top:264.80px;font-size:15px;line-height:18px;color:#111;white-space:nowrap;text-decoration:underline;text-underline-offset:1.2px;text-decoration-thickness:1.4px">242339</div>
<div style="position:absolute;left:715px;top:265.80px;font-size:13.5px;line-height:17px;color:#111;white-space:nowrap;text-decoration:underline;text-underline-offset:1.2px;text-decoration-thickness:1.4px">KAPA</div>
<div style="position:absolute;left:880px;width:50px;text-align:right;top:265.30px;font-size:15px;line-height:18px;color:#111;white-space:nowrap">20,00</div>
<div style="position:absolute;left:937px;top:266.30px;width:229px;overflow:hidden;font-size:12.6px;line-height:16px;color:#111;white-space:nowrap">MON-&gt;KONH6MAN-&gt;SVH6</div>
<div style="position:absolute;left:430px;top:267.3px;width:16px;height:16px;background:#fff;border:1.5px solid #333;"></div>
<svg style="position:absolute;left:430px;top:267.30px" width="16" height="16" viewBox="0 0 16 16"><path d="M3.5 8 L6.5 11.5 L12.5 4" stroke="#222" stroke-width="1.5" fill="none"/></svg>
<div style="position:absolute;left:1203px;top:91px;width:768px;height:190px;background:#ececec;"></div>
<div style="position:absolute;left:1207px;top:91px;width:31px;height:146px;background:#ffffff;border-left:1px solid #d8d8d8;"></div>
<div style="position:absolute;left:1207px;top:237px;width:31px;height:45px;background:#eeeeee;border-left:1px solid #d8d8d8;border-top:1px solid #d0d0d0;"></div>
<svg style="position:absolute;left:1217.5px;top:107.5px" width="9" height="8" viewBox="0 0 9 8"><path d="M0 0 L9 0 L4.5 8Z" fill="#858585"/></svg>
<svg style="position:absolute;left:1217.5px;top:249px" width="9" height="8" viewBox="0 0 9 8"><path d="M0 0 L9 0 L4.5 8Z" fill="#858585"/></svg>
<div style="position:absolute;left:1231px;top:127px;transform-origin:0 0;transform:rotate(90deg);font-size:15.5px;line-height:18px;color:#111;white-space:nowrap;-webkit-text-stroke:0.5px #111"><span class="u">1</span> Arbeitslisten</div>
<div style="position:absolute;left:1231px;top:269px;transform-origin:0 0;transform:rotate(90deg);font-size:15.8px;line-height:18px;color:#111;white-space:nowrap">Ta</div>
<div style="position:absolute;left:1237.5px;top:94.1px;width:281.4px;height:23.400000000000006px;background:#ececec;border-top:1px solid #dadada;border-right:1px solid #d6d6d6;border-left:1px solid #f8f8f8;"></div>
<svg style="position:absolute;left:1255.2px;top:102.3px" width="7" height="8" viewBox="0 0 7 8"><path d="M0 0 L7 4.0 L0 8Z" fill="#959595"/></svg>
<div style="position:absolute;left:1275.2px;top:98.10px;font-size:14.5px;line-height:17.40px;color:#111;font-weight:normal;white-space:nowrap;">H1: Extern Oberflächenbehandlung</div>
<div style="position:absolute;left:1518.9px;top:94.1px;width:239.8px;height:23.400000000000006px;background:#ececec;border-top:1px solid #dadada;border-right:1px solid #d6d6d6;border-left:1px solid #f8f8f8;"></div>
<svg style="position:absolute;left:1536.9px;top:102.3px" width="7" height="8" viewBox="0 0 7 8"><path d="M0 0 L7 4.0 L0 8Z" fill="#959595"/></svg>
<div style="position:absolute;left:1558px;top:98.10px;font-size:14.5px;line-height:17.40px;color:#111;font-weight:normal;white-space:nowrap;">H2: Extern Warmbehandlung</div>
<div style="position:absolute;left:1758.7px;top:94.1px;width:190.3px;height:23.400000000000006px;background:#ececec;border-top:1px solid #dadada;border-right:1px solid #d6d6d6;border-left:1px solid #f8f8f8;"></div>
<svg style="position:absolute;left:1776.5px;top:102.3px" width="7" height="8" viewBox="0 0 7 8"><path d="M0 0 L7 4.0 L0 8Z" fill="#959595"/></svg>
<div style="position:absolute;left:1796.6px;top:98.10px;font-size:14.5px;line-height:17.40px;color:#111;font-weight:normal;white-space:nowrap;">H3: Extern Sonstige 1</div>
<div style="position:absolute;left:1949px;top:94.1px;width:151px;height:23.400000000000006px;background:#ececec;border-top:1px solid #dadada;border-right:1px solid #d6d6d6;border-left:1px solid #f8f8f8;"></div>
<svg style="position:absolute;left:1961.5px;top:102.3px" width="7" height="8" viewBox="0 0 7 8"><path d="M0 0 L7 4.0 L0 8Z" fill="#959595"/></svg>
<div style="position:absolute;left:1237.5px;top:117.5px;width:149.1px;height:24.30000000000001px;background:#ececec;border-top:1px solid #dadada;border-right:1px solid #d6d6d6;border-left:1px solid #f8f8f8;"></div>
<svg style="position:absolute;left:1263.0px;top:126.2px" width="7" height="8" viewBox="0 0 7 8"><path d="M0 0 L7 4.0 L0 8Z" fill="#959595"/></svg>
<div style="position:absolute;left:1283.3px;top:121.95px;font-size:14.5px;line-height:17.40px;color:#111;font-weight:normal;white-space:nowrap;">10: Drehen A</div>
<div style="position:absolute;left:1386.6px;top:117.5px;width:150.6px;height:24.30000000000001px;background:#ececec;border-top:1px solid #dadada;border-right:1px solid #d6d6d6;border-left:1px solid #f8f8f8;"></div>
<svg style="position:absolute;left:1412.9px;top:126.2px" width="7" height="8" viewBox="0 0 7 8"><path d="M0 0 L7 4.0 L0 8Z" fill="#959595"/></svg>
<div style="position:absolute;left:1433.6px;top:121.95px;font-size:14.5px;line-height:17.40px;color:#111;font-weight:normal;white-space:nowrap;">11: Drehen B</div>
<div style="position:absolute;left:1537.2px;top:117.5px;width:158.8px;height:24.30000000000001px;background:#ececec;border-top:1px solid #dadada;border-right:1px solid #d6d6d6;border-left:1px solid #f8f8f8;"></div>
<svg style="position:absolute;left:1565.0px;top:126.2px" width="7" height="8" viewBox="0 0 7 8"><path d="M0 0 L7 4.0 L0 8Z" fill="#959595"/></svg>
<div style="position:absolute;left:1586.3px;top:121.95px;font-size:14.5px;line-height:17.40px;color:#111;font-weight:normal;white-space:nowrap;">12: Drehen&nbsp; C</div>
<div style="position:absolute;left:1696px;top:117.5px;width:154.2px;height:24.30000000000001px;background:#ececec;border-top:1px solid #dadada;border-right:1px solid #d6d6d6;border-left:1px solid #f8f8f8;"></div>
<svg style="position:absolute;left:1722.5px;top:126.2px" width="7" height="8" viewBox="0 0 7 8"><path d="M0 0 L7 4.0 L0 8Z" fill="#959595"/></svg>
<div style="position:absolute;left:1743.8px;top:121.95px;font-size:14.5px;line-height:17.40px;color:#111;font-weight:normal;white-space:nowrap;">13: Drehen D</div>
<div style="position:absolute;left:1850.2px;top:117.5px;width:249.8px;height:24.30000000000001px;background:#ececec;border-top:1px solid #dadada;border-right:1px solid #d6d6d6;border-left:1px solid #f8f8f8;"></div>
<svg style="position:absolute;left:1881.9px;top:126.2px" width="7" height="8" viewBox="0 0 7 8"><path d="M0 0 L7 4.0 L0 8Z" fill="#959595"/></svg>
<div style="position:absolute;left:1903.4px;top:121.95px;font-size:14.5px;line-height:17.40px;color:#111;font-weight:normal;white-space:nowrap;">15: Programm</div>
<div style="position:absolute;left:1237.5px;top:141.8px;width:216.0px;height:24.399999999999977px;background:#ececec;border-top:1px solid #dadada;border-right:1px solid #d6d6d6;border-left:1px solid #f8f8f8;"></div>
<svg style="position:absolute;left:1266.1px;top:150.5px" width="7" height="8" viewBox="0 0 7 8"><path d="M0 0 L7 4.0 L0 8Z" fill="#959595"/></svg>
<div style="position:absolute;left:1286px;top:146.30px;font-size:14.5px;line-height:17.40px;color:#111;font-weight:normal;white-space:nowrap;">21: Fräsen B&nbsp; (Halle4)</div>
<div style="position:absolute;left:1453.5px;top:141.8px;width:153.4px;height:24.399999999999977px;background:#ececec;border-top:1px solid #dadada;border-right:1px solid #d6d6d6;border-left:1px solid #f8f8f8;"></div>
<svg style="position:absolute;left:1480.1px;top:150.5px" width="7" height="8" viewBox="0 0 7 8"><path d="M0 0 L7 4.0 L0 8Z" fill="#959595"/></svg>
<div style="position:absolute;left:1500.5px;top:146.30px;font-size:14.5px;line-height:17.40px;color:#111;font-weight:normal;white-space:nowrap;">30: Erodieren</div>
<div style="position:absolute;left:1606.9px;top:141.8px;width:272.7px;height:24.399999999999977px;background:#ececec;border-top:1px solid #dadada;border-right:1px solid #d6d6d6;border-left:1px solid #f8f8f8;"></div>
<svg style="position:absolute;left:1642.5px;top:150.5px" width="7" height="8" viewBox="0 0 7 8"><path d="M0 0 L7 4.0 L0 8Z" fill="#959595"/></svg>
<div style="position:absolute;left:1662.8px;top:146.30px;font-size:14.5px;line-height:17.40px;color:#111;font-weight:normal;white-space:nowrap;">40: Fräsen Mill-Plus (Halle 3)</div>
<div style="position:absolute;left:1879.6px;top:141.8px;width:220.4px;height:24.399999999999977px;background:#ececec;border-top:1px solid #dadada;border-right:1px solid #d6d6d6;border-left:1px solid #f8f8f8;"></div>
<svg style="position:absolute;left:1914.5px;top:150.5px" width="7" height="8" viewBox="0 0 7 8"><path d="M0 0 L7 4.0 L0 8Z" fill="#959595"/></svg>
<div style="position:absolute;left:1935.5px;top:146.30px;font-size:14.5px;line-height:17.40px;color:#111;font-weight:normal;white-space:nowrap;">41: Fräsen</div>
<div style="position:absolute;left:1237.5px;top:166.2px;width:236.4px;height:23.30000000000001px;background:#ececec;border-top:1px solid #dadada;border-right:1px solid #d6d6d6;border-left:1px solid #f8f8f8;"></div>
<svg style="position:absolute;left:1261.1px;top:174.3px" width="7" height="8" viewBox="0 0 7 8"><path d="M0 0 L7 4.0 L0 8Z" fill="#959595"/></svg>
<div style="position:absolute;left:1281.4px;top:170.15px;font-size:14.5px;line-height:17.40px;color:#111;font-weight:normal;white-space:nowrap;">65: ExHo/Schweiß./Risspr.</div>
<div style="position:absolute;left:1473.9px;top:166.2px;width:129.1px;height:23.30000000000001px;background:#ececec;border-top:1px solid #dadada;border-right:1px solid #d6d6d6;border-left:1px solid #f8f8f8;"></div>
<svg style="position:absolute;left:1494.5px;top:174.3px" width="7" height="8" viewBox="0 0 7 8"><path d="M0 0 L7 4.0 L0 8Z" fill="#959595"/></svg>
<div style="position:absolute;left:1515px;top:170.15px;font-size:14.5px;line-height:17.40px;color:#111;font-weight:normal;white-space:nowrap;">68: Sägerei</div>
<div style="position:absolute;left:1603px;top:166.2px;width:231.6px;height:23.30000000000001px;background:#ececec;border-top:1px solid #dadada;border-right:1px solid #d6d6d6;border-left:1px solid #f8f8f8;"></div>
<svg style="position:absolute;left:1628.8px;top:174.3px" width="7" height="8" viewBox="0 0 7 8"><path d="M0 0 L7 4.0 L0 8Z" fill="#959595"/></svg>
<div style="position:absolute;left:1649px;top:170.15px;font-size:14.5px;line-height:17.40px;color:#111;font-weight:normal;white-space:nowrap;">70: Ausbildung Sonstiges</div>
<div style="position:absolute;left:1834.6px;top:166.2px;width:265.4px;height:23.30000000000001px;background:#ececec;border-top:1px solid #dadada;border-right:1px solid #d6d6d6;border-left:1px solid #f8f8f8;"></div>
<svg style="position:absolute;left:1857.7px;top:174.3px" width="7" height="8" viewBox="0 0 7 8"><path d="M0 0 L7 4.0 L0 8Z" fill="#959595"/></svg>
<div style="position:absolute;left:1878.8px;top:170.15px;font-size:14.5px;line-height:17.40px;color:#111;font-weight:normal;white-space:nowrap;">71: Ausbildung</div>
<div style="position:absolute;left:1237.5px;top:189.5px;width:175.7px;height:24.30000000000001px;background:#ececec;border-top:1px solid #dadada;border-right:1px solid #d6d6d6;border-left:1px solid #f8f8f8;"></div>
<svg style="position:absolute;left:1254.5px;top:198.2px" width="7" height="8" viewBox="0 0 7 8"><path d="M0 0 L7 4.0 L0 8Z" fill="#959595"/></svg>
<div style="position:absolute;left:1274.3px;top:193.95px;font-size:14.5px;line-height:17.40px;color:#111;font-weight:normal;white-space:nowrap;">92: Kontrolle Halle5</div>
<div style="position:absolute;left:1413.2px;top:189.5px;width:179.2px;height:24.30000000000001px;background:#ececec;border-top:1px solid #dadada;border-right:1px solid #d6d6d6;border-left:1px solid #f8f8f8;"></div>
<svg style="position:absolute;left:1431.2px;top:198.2px" width="7" height="8" viewBox="0 0 7 8"><path d="M0 0 L7 4.0 L0 8Z" fill="#959595"/></svg>
<div style="position:absolute;left:1452.3px;top:193.95px;font-size:14.5px;line-height:17.40px;color:#111;font-weight:normal;white-space:nowrap;">94: Kontrolle Halle4</div>
<div style="position:absolute;left:1592.4px;top:189.5px;width:177.6px;height:24.30000000000001px;background:#ececec;border-top:1px solid #dadada;border-right:1px solid #d6d6d6;border-left:1px solid #f8f8f8;"></div>
<svg style="position:absolute;left:1609.3px;top:198.2px" width="7" height="8" viewBox="0 0 7 8"><path d="M0 0 L7 4.0 L0 8Z" fill="#959595"/></svg>
<div style="position:absolute;left:1630.4px;top:193.95px;font-size:14.5px;line-height:17.40px;color:#111;font-weight:normal;white-space:nowrap;">96: Kontrolle Halle1</div>
<div style="position:absolute;left:1770px;top:189.5px;width:177.3px;height:24.30000000000001px;background:#ececec;border-top:1px solid #dadada;border-right:1px solid #d6d6d6;border-left:1px solid #f8f8f8;"></div>
<svg style="position:absolute;left:1787.3px;top:198.2px" width="7" height="8" viewBox="0 0 7 8"><path d="M0 0 L7 4.0 L0 8Z" fill="#959595"/></svg>
<div style="position:absolute;left:1807.6px;top:193.95px;font-size:14.5px;line-height:17.40px;color:#111;font-weight:normal;white-space:nowrap;">97: Kontrolle Halle3</div>
<div style="position:absolute;left:1947.3px;top:189.5px;width:152.7px;height:24.30000000000001px;background:#ececec;border-top:1px solid #dadada;border-right:1px solid #d6d6d6;border-left:1px solid #f8f8f8;"></div>
<svg style="position:absolute;left:1961.5px;top:198.2px" width="7" height="8" viewBox="0 0 7 8"><path d="M0 0 L7 4.0 L0 8Z" fill="#959595"/></svg>
<div style="position:absolute;left:1237.5px;top:213.8px;width:156.9px;height:23.399999999999977px;background:#ececec;border-top:1px solid #dadada;border-right:1px solid #d6d6d6;border-left:1px solid #f8f8f8;"></div>
<svg style="position:absolute;left:1253.2px;top:222.0px" width="7" height="8" viewBox="0 0 7 8"><path d="M0 0 L7 4.0 L0 8Z" fill="#959595"/></svg>
<div style="position:absolute;left:1273.2px;top:217.80px;font-size:14.5px;line-height:17.40px;color:#111;font-weight:normal;white-space:nowrap;">A2: Multus + WFL</div>
<div style="position:absolute;left:1394.4px;top:213.8px;width:228.1px;height:23.399999999999977px;background:#ececec;border-top:1px solid #dadada;border-right:1px solid #d6d6d6;border-left:1px solid #f8f8f8;"></div>
<svg style="position:absolute;left:1411.7px;top:222.0px" width="7" height="8" viewBox="0 0 7 8"><path d="M0 0 L7 4.0 L0 8Z" fill="#959595"/></svg>
<div style="position:absolute;left:1432.8px;top:217.80px;font-size:14.5px;line-height:17.40px;color:#111;font-weight:normal;white-space:nowrap;">B1: Fräsen kompl. (Halle 4)</div>
<div style="position:absolute;left:1622.5px;top:213.8px;width:258.3px;height:23.399999999999977px;background:#ececec;border-top:1px solid #dadada;border-right:1px solid #d6d6d6;border-left:1px solid #f8f8f8;"></div>
<svg style="position:absolute;left:1640.5px;top:222.0px" width="7" height="8" viewBox="0 0 7 8"><path d="M0 0 L7 4.0 L0 8Z" fill="#959595"/></svg>
<div style="position:absolute;left:1660.9px;top:217.80px;font-size:14.5px;line-height:17.40px;color:#111;font-weight:normal;white-space:nowrap;">B2: NMV30 / NMV30FD (Halle 4)</div>
<div style="position:absolute;left:1880.8px;top:213.8px;width:219.2px;height:23.399999999999977px;background:#ececec;border-top:1px solid #dadada;border-right:1px solid #d6d6d6;border-left:1px solid #f8f8f8;"></div>
<svg style="position:absolute;left:1896.8px;top:222.0px" width="7" height="8" viewBox="0 0 7 8"><path d="M0 0 L7 4.0 L0 8Z" fill="#959595"/></svg>
<div style="position:absolute;left:1917.1px;top:217.80px;font-size:14.5px;line-height:17.40px;color:#111;font-weight:normal;white-space:nowrap;">B3: Fräsen</div>
<div style="position:absolute;left:1237.5px;top:237.2px;width:209.8px;height:24.30000000000001px;background:#ececec;border-top:1px solid #dadada;border-right:1px solid #d6d6d6;border-left:1px solid #f8f8f8;"></div>
<svg style="position:absolute;left:1268.9px;top:245.8px" width="7" height="8" viewBox="0 0 7 8"><path d="M0 0 L7 4.0 L0 8Z" fill="#959595"/></svg>
<div style="position:absolute;left:1289.2px;top:241.65px;font-size:14.5px;line-height:17.40px;color:#111;font-weight:normal;white-space:nowrap;">C1: Sonstiges (PAG)</div>
<div style="position:absolute;left:1447.3px;top:237.2px;width:239.7px;height:24.30000000000001px;background:#ececec;border-top:1px solid #dadada;border-right:1px solid #d6d6d6;border-left:1px solid #f8f8f8;"></div>
<svg style="position:absolute;left:1482.1px;top:245.8px" width="7" height="8" viewBox="0 0 7 8"><path d="M0 0 L7 4.0 L0 8Z" fill="#959595"/></svg>
<div style="position:absolute;left:1502.4px;top:241.65px;font-size:14.5px;line-height:17.40px;color:#111;font-weight:normal;white-space:nowrap;">D: Fräsen Linear kompl.</div>
<div style="position:absolute;left:1687px;top:236.2px;width:178px;height:26.30000000000001px;background:#ffffff;border:1px solid #d8d8d8;border-bottom:none;"></div>
<svg style="position:absolute;left:1716.0px;top:245.8px" width="7" height="8" viewBox="0 0 7 8"><path d="M0 0 L7 4.0 L0 8Z" fill="#959595"/></svg>
<div style="position:absolute;left:1736.8px;top:242.25px;font-size:13.5px;line-height:16.20px;color:#111;font-weight:bold;white-space:nowrap;">E: Finish kompl.</div>
<div style="position:absolute;left:1865px;top:237.2px;width:235px;height:24.30000000000001px;background:#ececec;border-top:1px solid #dadada;border-right:1px solid #d6d6d6;border-left:1px solid #f8f8f8;"></div>
<svg style="position:absolute;left:1898.8px;top:245.8px" width="7" height="8" viewBox="0 0 7 8"><path d="M0 0 L7 4.0 L0 8Z" fill="#959595"/></svg>
<div style="position:absolute;left:1919px;top:241.65px;font-size:14.5px;line-height:17.40px;color:#111;font-weight:normal;white-space:nowrap;">E1: Finish</div>
<div style="position:absolute;left:1236px;top:262px;width:735px;height:20px;background:#c5d1df;border-top:2px solid #585858;border-left:2px solid #585858;box-shadow:inset 0 1px 0 #e6eef8;"></div>
<div style="position:absolute;left:286px;top:280px;width:1685px;height:789px;background:#ffffff;border-top:1px solid #9a9a9a;border-left:1px solid #a8a8a8;"></div>
<svg style="position:absolute;left:297px;top:289px" width="19" height="16" viewBox="0 0 19 16">
      <rect x="0.5" y="0.5" width="18" height="15" rx="2" fill="#1a78c2"/><rect x="3" y="3" width="13" height="10" fill="#d8ecf8"/>
      <rect x="3" y="3" width="3" height="10" fill="#1a78c2"/><path d="M8 4 L12 8 L8 12" stroke="#1a78c2" stroke-width="2.2" fill="none"/></svg>
<div style="position:absolute;left:322.7px;top:290.50px;font-size:12.5px;line-height:15.00px;color:#a0a0a0;font-weight:normal;white-space:nowrap;">PRODAT ERP</div>
<svg style="position:absolute;left:1946px;top:291px" width="14" height="14" viewBox="0 0 14 14"><path d="M1.5 1.5 L12.5 12.5 M12.5 1.5 L1.5 12.5" stroke="#8a8a8a" stroke-width="1"/></svg>
<div style="position:absolute;left:287px;top:317px;width:1684px;height:27px;background:#f0f0f0;"></div>
<div style="position:absolute;left:287px;top:317px;width:156px;height:27px;background:#ffffff;border-right:1px solid #e0e0e0;"></div>
<svg style="position:absolute;left:297px;top:322px" width="19" height="16" viewBox="0 0 19 16">
      <path d="M0.5 8.5 L3.5 5.5 L7 9 L15.5 0.5 L18.5 3.5 L7 15Z" fill="#3aa82a"/><path d="M0.5 8.5 L3.5 5.5 L7 9 L15.5 0.5 L17 2 L7 12Z" fill="#70d850"/></svg>
<div style="position:absolute;left:325px;top:322.98px;font-size:14.2px;line-height:17.04px;color:#111;font-weight:bold;white-space:nowrap;">Neu terminieren</div>
<div style="position:absolute;left:287px;top:343px;width:265px;height:693px;background:#bfc0cf;"></div>
<div style="position:absolute;right:1436px;top:372.84px;font-size:15.6px;line-height:18.72px;color:#111;font-weight:bold;white-space:nowrap;text-align:right;">ABK-Index</div>
<div style="position:absolute;right:1436px;top:404.54px;font-size:15.6px;line-height:18.72px;color:#111;font-weight:bold;white-space:nowrap;text-align:right;">Artikel</div>
<div style="position:absolute;right:1436px;top:464.54px;font-size:15.6px;line-height:18.72px;color:#111;font-weight:bold;white-space:nowrap;text-align:right;">Datum&nbsp; Start Terminierung</div>
<div style="position:absolute;right:1436px;top:502.54px;font-size:15.6px;line-height:18.72px;color:#111;font-weight:bold;white-space:nowrap;text-align:right;">Beschaffungsfrist Material</div>
<div style="position:absolute;left:551px;top:343px;width:665px;height:693px;background:#eff0f2;border-left:2px solid #6e6e6e;border-top:2px solid #8a8a8a;border-right:2px solid #6e6e6e;border-bottom:2px solid #8a8a8a;"></div>
<div style="position:absolute;left:572px;top:370px;width:143px;height:22px;background:#ececec;border:1px solid #c4c4c4;"></div>
<div style="position:absolute;right:1259px;top:372.24px;font-size:14.6px;line-height:17.52px;color:#111;font-weight:normal;white-space:nowrap;text-align:right;">242394</div>
<div style="position:absolute;right:921.3px;top:373.94px;font-size:13.1px;line-height:15.72px;color:#111;font-weight:normal;white-space:nowrap;text-align:right;">Today is</div>
<div style="position:absolute;left:1058px;top:370px;width:118px;height:22px;background:#ffffff;border:1px solid #c8c8c8;"></div>
<div style="position:absolute;left:1062px;top:372.74px;font-size:14.6px;line-height:17.52px;color:#111;font-weight:normal;white-space:nowrap;">13.06.2024</div>
<svg style="position:absolute;left:1160px;top:379.5px" width="8" height="5" viewBox="0 0 8 5"><path d="M0 0 L8 0 L4 4.5Z" fill="#6a6a6a"/></svg>
<div style="position:absolute;left:572px;top:402px;width:218px;height:23px;background:#ececec;border:1px solid #c4c4c4;"></div>
<div style="position:absolute;left:575px;top:404.77px;font-size:14.55px;line-height:17.46px;color:#111;font-weight:normal;white-space:nowrap;">TRUM2539642'05'</div>
<div style="position:absolute;left:798px;top:402px;width:378px;height:23px;background:#ececec;border:1px solid #c4c4c4;"></div>
<div style="position:absolute;left:800px;top:404.80px;font-size:14.5px;line-height:17.40px;color:#111;font-weight:normal;white-space:nowrap;">Kamera Justierplatte Platte NIA MK1.0</div>
<div style="position:absolute;left:572px;top:462px;width:143px;height:23px;background:#ffffff;border:1px solid #c4c4c4;"></div>
<div style="position:absolute;left:575px;top:464.68px;font-size:14.7px;line-height:17.64px;color:#111;font-weight:normal;white-space:nowrap;">21.06.2024</div>
<svg style="position:absolute;left:699px;top:471.5px" width="8" height="5" viewBox="0 0 8 5"><path d="M0 0 L8 0 L4 4.5Z" fill="#6a6a6a"/></svg>
<div style="position:absolute;left:724px;top:462px;width:83px;height:25px;background:#ffffff;border:1px solid #c4c4c4;"></div>
<div style="position:absolute;left:727px;top:465.18px;font-size:14.7px;line-height:17.64px;color:#111;font-weight:normal;white-space:nowrap;">00:00</div>
<svg style="position:absolute;left:791px;top:465px" width="10" height="18" viewBox="0 0 10 18"><path d="M2 5.5 L5 2.5 L8 5.5Z" fill="#555"/><path d="M2 12.5 L5 15.5 L8 12.5Z" fill="#555"/></svg>
<div style="position:absolute;left:839px;top:461px;width:338px;height:25px;background:#ffffff;border:1px solid #7a7a7a;"></div>
<div style="position:absolute;left:843px;top:464px;width:311px;overflow:hidden;font-size:14.7px;line-height:18px;color:#111;white-space:nowrap">Vorwärts terminieren und packen (AG vom Zieltermin)</div>
<svg style="position:absolute;left:1160px;top:468px" width="12" height="10" viewBox="0 0 12 10"><path d="M1 3 L6 8 L11 3" stroke="#333" stroke-width="1.3" fill="none"/></svg>
<div style="position:absolute;left:572px;top:501px;width:143px;height:22px;background:#e6e6e6;border:1px solid #cfcfcf;"></div>
<div style="position:absolute;left:575px;top:502.68px;font-size:14.7px;line-height:17.64px;color:#a8a8a8;font-weight:normal;white-space:nowrap;">08.08.2024</div>
<svg style="position:absolute;left:699px;top:509.5px" width="8" height="5" viewBox="0 0 8 5"><path d="M0 0 L8 0 L4 4.5Z" fill="#b0b0b0"/></svg>
<div style="position:absolute;left:724.6px;top:502.68px;font-size:14.7px;line-height:17.64px;color:#111;font-weight:normal;white-space:nowrap;">(40)</div>
<div style="position:absolute;left:571px;top:700px;width:606px;height:172px;background:#e8e8e8;border:1px solid #d4d4d4;border-radius:4px;"></div>
<div style="position:absolute;left:632px;top:785px;width:16px;height:16px;background:#ffffff;border:1.5px solid #333;"></div>
<div style="position:absolute;left:651.3px;top:784.30px;font-size:15px;line-height:18.00px;color:#e02020;font-weight:normal;white-space:nowrap;font-style:italic;">Benachbarte Arbeitsgänge ignorieren / überlappen</div>
<div style="position:absolute;left:593px;top:833px;width:16px;height:16px;background:#ffffff;border:1.5px solid #333;"></div>
<div style="position:absolute;left:612.8px;top:832.20px;font-size:14.67px;line-height:17.60px;color:#111;font-weight:normal;white-space:nowrap;">Gesamte Baugruppe aus- &amp; einterminieren (Alternativ: nur diese ABK / Einzelteil)</div>
<div style="position:absolute;left:571px;top:902px;width:279px;height:54px;background:linear-gradient(#f8f9fa 0%,#eff1f3 21%,#cbd1da 23%,#d8dde4 55%,#e8ebef 100%);border:1px solid #9296a0;border-radius:3px;box-shadow:inset 0 0 0 1px #f4f6f8;"></div>
<div style="position:absolute;left:409.4px;width:600px;top:919.96px;font-size:13.4px;line-height:16.08px;color:#111;font-weight:normal;white-space:nowrap;text-align:center;">Vorschau</div>
<div style="position:absolute;left:984px;top:902px;width:193px;height:28px;background:linear-gradient(#f8f9fa 0%,#eff1f3 30%,#cbd1da 33%,#d8dde4 65%,#e8ebef 100%);border:1px solid #9296a0;border-radius:3px;box-shadow:inset 0 0 0 1px #f4f6f8;"></div>
<div style="position:absolute;left:779px;width:600px;top:908.29px;font-size:12.85px;line-height:15.42px;color:#111;font-weight:normal;white-space:nowrap;text-align:center;">Daten anzeigen</div>
<div style="position:absolute;left:984px;top:930px;width:193px;height:29px;background:linear-gradient(#f8f9fa 0%,#eff1f3 30%,#cbd1da 33%,#d8dde4 65%,#e8ebef 100%);border:1px solid #9296a0;border-radius:3px;box-shadow:inset 0 0 0 1px #f4f6f8;"></div>
<div style="position:absolute;left:779.5px;width:600px;top:936.14px;font-size:13.1px;line-height:15.72px;color:#111;font-weight:normal;white-space:nowrap;text-align:center;">Grafisch anzeigen (Gantt)</div>
<div style="position:absolute;left:1215px;top:343px;width:756px;height:693px;background:#ffffff;border-left:2px solid #6e6e6e;border-top:2px solid #8a8a8a;border-bottom:2px solid #8a8a8a;"></div>
<svg style="position:absolute;left:1219px;top:350px" width="9" height="12" viewBox="0 0 9 12">
      <path d="M0 1h2M0 4h2M0 7h2M0 10h2M3 1h6M3 4h6M3 7h6M3 10h6" stroke="#222" stroke-width="1.2"/></svg>
<div style="position:absolute;left:1231px;top:369px;width:740px;height:22px;background:#ececec;border-bottom:1px solid #dcdcdc;"></div>
<div style="position:absolute;left:1217px;top:369px;width:14px;height:22px;background:#ffffff;"></div>
<div style="position:absolute;left:1230.8px;top:345px;width:1px;height:46px;background:#dedede;"></div>
<div style="position:absolute;left:1340.6px;top:345px;width:1px;height:46px;background:#dedede;"></div>
<div style="position:absolute;left:1528.4px;top:345px;width:1px;height:46px;background:#dedede;"></div>
<div style="position:absolute;left:1749.7px;top:345px;width:1px;height:46px;background:#dedede;"></div>
<div style="position:absolute;left:1860.4px;top:345px;width:1px;height:46px;background:#dedede;"></div>
<div style="position:absolute;left:1231px;top:369px;width:17px;height:22px;background:#ffffff;"></div>
<div style="position:absolute;left:1235px;top:348.54px;font-size:13.1px;line-height:15.72px;color:#111;font-weight:normal;white-space:nowrap;">ABK-Index (ABK)</div>
<div style="position:absolute;left:1345px;top:348.54px;font-size:13.1px;line-height:15.72px;color:#111;font-weight:normal;white-space:nowrap;">Artikel / Arbeitspaket (ABK)</div>
<div style="position:absolute;left:1533px;top:348.54px;font-size:13.1px;line-height:15.72px;color:#111;font-weight:normal;white-space:nowrap;">Artikelbezeichnung</div>
<div style="position:absolute;left:1753.6px;top:348.54px;font-size:13.1px;line-height:15.72px;color:#111;font-weight:normal;white-space:nowrap;">AT</div>
<div style="position:absolute;left:1864.3px;top:348.54px;font-size:13.1px;line-height:15.72px;color:#111;font-weight:normal;white-space:nowrap;">ET</div>
<svg style="position:absolute;left:1220px;top:373px" width="8" height="13" viewBox="0 0 8 13"><path d="M1 1 L7 6.5 L1 12Z" fill="#111"/></svg>
<div style="position:absolute;right:634px;top:371.60px;font-size:13.5px;line-height:16.20px;color:#111;font-weight:bold;white-space:nowrap;text-align:right;">242394</div>
<div style="position:absolute;left:1345px;top:371.60px;font-size:13.5px;line-height:16.20px;color:#111;font-weight:bold;white-space:nowrap;">TRUM2539642'05'</div>
<div style="position:absolute;left:1532px;top:371px;width:215px;overflow:hidden;font-size:13.5px;line-height:17px;color:#111;font-weight:bold;white-space:nowrap">Kamera Justierplatte Platte NIA MK1.0</div>
<div style="position:absolute;left:1838px;top:370px;width:20px;height:20px;background:#e8e8e8;border:1px solid #a8a8a8;"></div>
<svg style="position:absolute;left:1842px;top:376px" width="12" height="8" viewBox="0 0 12 8"><path d="M1 1 L6 6 L11 1" stroke="#333" stroke-width="1.2" fill="none"/></svg>
<div style="position:absolute;left:1948px;top:370px;width:20px;height:20px;background:#e8e8e8;border:1px solid #a8a8a8;"></div>
<svg style="position:absolute;left:1952px;top:376px" width="12" height="8" viewBox="0 0 12 8"><path d="M1 1 L6 6 L11 1" stroke="#333" stroke-width="1.2" fill="none"/></svg>
<div style="position:absolute;left:1217px;top:1006px;width:754px;height:28px;background:#efefef;border-top:1px solid #dcdcdc;"></div>
<div style="position:absolute;left:1230px;top:1007px;width:1px;height:27px;background:#f8f8f8;"></div>
<div style="position:absolute;left:1232px;top:1009px;width:108px;height:22px;background:#ececec;border:1px solid #c8c8c8;border-left:2px solid #9a9a9a;border-top:2px solid #9a9a9a;"></div>
<div style="position:absolute;right:634px;top:1012.14px;font-size:13.1px;line-height:15.72px;color:#111;font-weight:normal;white-space:nowrap;text-align:right;">1</div>
<div style="position:absolute;left:287px;top:1036px;width:1684px;height:33px;background:#fdfdfd;"></div>
<div style="position:absolute;left:287px;top:1037px;width:166px;height:32px;background:linear-gradient(#fdfdfd 0%,#ececec 40%,#dedede 60%,#e8e8e8 100%);border:1px solid #c0c0c0;border-radius:2px;"></div>
<svg style="position:absolute;left:350px;top:1044px" width="18" height="16" viewBox="0 0 18 16"><path d="M1 8 L4 5 L7 9 L15 1 L17 4 L7 14Z" fill="#b8b8b8"/></svg>
<div style="position:absolute;left:373.8px;top:1044.10px;font-size:13.5px;line-height:16.20px;color:#a0a0a0;font-weight:normal;white-space:nowrap;"><span class='u'>O</span>k</div>
<div style="position:absolute;left:453px;top:1037px;width:130px;height:32px;background:linear-gradient(#fdfdfd 0%,#e8e9ee 40%,#dadbe4 60%,#e6e7ec 100%);border:1px solid #a8aab4;border-radius:2px;"></div>
<svg style="position:absolute;left:472px;top:1043px" width="19" height="18" viewBox="0 0 19 18"><path d="M2 3 L5 1 L9.5 6 L14 1 L17 3 L12.5 9 L17 15 L14 17 L9.5 12 L5 17 L2 15 L6.5 9Z" fill="#f04a1a" stroke="#c02a0a" stroke-width="0.8"/></svg>
<div style="position:absolute;left:497.3px;top:1043.90px;font-size:13.5px;line-height:16.20px;color:#111;font-weight:normal;white-space:nowrap;"><span class='u'>A</span>bbrechen</div>
<div style="position:absolute;left:317px;top:524px;width:1617px;height:245px;background:#ffffff;border:1px solid #3f78aa;box-shadow:0 0 5px rgba(90,150,210,0.25);"></div>
<div style="position:absolute;left:322.6px;top:531.78px;font-size:13.36px;line-height:16.03px;color:#111;font-weight:normal;white-space:nowrap;">PRODAT ERP&nbsp;&nbsp; [16 Fleischer, Jens @192.168.101.106:LOLL-LIVE] - Fehlermeldung</div>
<svg style="position:absolute;left:1908px;top:534px" width="13" height="13" viewBox="0 0 13 13"><path d="M0.5 0.5 L12.5 12.5 M12.5 0.5 L0.5 12.5" stroke="#222" stroke-width="1.2"/></svg>
<svg style="position:absolute;left:329px;top:567px" width="41" height="40" viewBox="0 0 41 40">
      <path d="M20.5 1 L40 39 L1 39Z" fill="#fcd116" stroke="#e8b800" stroke-width="1"/><rect x="19" y="13" width="3" height="15" fill="#111"/><rect x="19" y="31" width="3" height="3" fill="#111"/></svg>
<div style="position:absolute;left:381.4px;top:570.84px;font-size:18.6px;line-height:22.32px;color:#2352a0;font-weight:normal;white-space:nowrap;">Eingabe ungültig (Daten)</div>
<div style="position:absolute;left:381px;top:612.17px;font-size:13.89px;line-height:16.67px;color:#111;font-weight:normal;white-space:nowrap;">Termination failed for abk, ab_ap_nr, a2_n: 242394, TRUM2539642'05', 60, tplanterm.ks_day_kapa&gt;&gt;FIN /4&lt;&lt; only works on one given date, not a range bigger than one day. given range is: 2025-01-08 21:37:00 ~&gt; 2025-06-21 00:00:00. CHECK OFF</div>
<div style="position:absolute;left:381px;top:629.35px;font-size:14.09px;line-height:16.91px;color:#111;font-weight:normal;white-space:nowrap;">TIMES &gt;&gt;resource_timeline__renew_offtime&lt;&lt;</div>
<div style="position:absolute;left:318px;top:677px;width:1615px;height:50px;background:#f0f0f0;border-top:1px solid #dfdfdf;border-bottom:1px solid #dcdcdc;"></div>
<svg style="position:absolute;left:330px;top:690px" width="23" height="23" viewBox="0 0 23 23"><circle cx="11.5" cy="11.5" r="10.5" fill="none" stroke="#8a8a8a" stroke-width="1.1"/><path d="M6.5 9.5 L11.5 14.5 L16.5 9.5" stroke="#777" stroke-width="1.2" fill="none"/></svg>
<div style="position:absolute;left:363.3px;top:691.66px;font-size:14.9px;line-height:17.88px;color:#111;font-weight:normal;white-space:nowrap;">Mehr</div>
<div style="position:absolute;left:1817.5px;top:689.5px;width:101px;height:24.5px;background:#e1e1e1;border:2px solid #0078d7;"></div>
<div style="position:absolute;left:1568px;width:600px;top:693.14px;font-size:13.94px;line-height:16.73px;color:#111;font-weight:normal;white-space:nowrap;text-align:center;">Schließen</div>
<div style="position:absolute;left:318px;top:728px;width:1615px;height:40px;background:#f0f0f0;border-top:1px solid #ffffff;"></div>
<div style="position:absolute;left:331px;top:740.63px;font-size:13.62px;line-height:16.34px;color:#111;font-weight:normal;white-space:nowrap;">ECimException (EPgError)</div>
<svg style="position:absolute;left:677px;top:939.5px;filter:drop-shadow(1.5px 2px 1.5px rgba(0,0,0,0.35))" width="24" height="34" viewBox="0 0 24 34">
      <path d="M2.4 2.1 L2.4 23.5 L7.6 18.6 L11.4 27.6 L14.8 26.1 L11 17.4 L18.6 17.4Z" fill="#000" stroke="#fff" stroke-width="1.6" stroke-linejoin="miter"/></svg>
</body></html>
